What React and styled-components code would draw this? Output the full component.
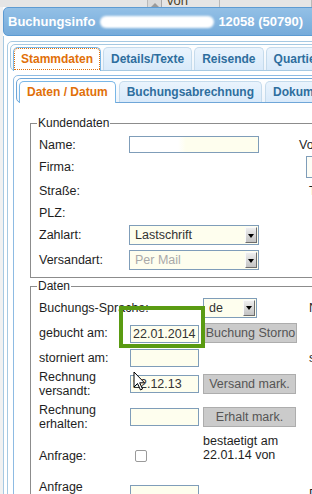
import styled, { createGlobalStyle } from "styled-components";

const FONT = `"Liberation Sans", Arial, sans-serif`;

const GlobalStyle = createGlobalStyle`
  html, body { margin: 0; padding: 0; background: #f1f1f1; }
  body { font-family: ${FONT}; }
`;

const Page = styled.div`
  position: relative;
  width: 312px;
  height: 494px;
  overflow: hidden;
  background: #f1f1f1;
`;

// strip of the page that shows behind the dialog
const BehindStrip = styled.div`
  display: flex;
  height: 7px;
  background: #e5e5e5;
  overflow: hidden;
`;

const StripCell = styled.div`
  flex: none;
  box-sizing: border-box;
  width: ${({ $w }) => $w}px;
  height: 7px;
  padding-left: ${({ $pad }) => $pad || 0}px;
  border-right: 1px solid #b9b9b9;
  overflow: hidden;
  color: #4d4328;
  font-size: 13px;
  line-height: 13px;

  span {
    display: block;
    margin-top: -6px;
  }
`;

const ScrollArrow = styled.div`
  flex: none;
  box-sizing: border-box;
  width: 14px;
  height: 7px;
  display: flex;
  justify-content: center;
  background: #dadada;
  border-right: 1px solid #a9a9a9;

  &::after {
    content: "";
    margin-top: 1px;
    border: 4px solid transparent;
    border-top: none;
    border-bottom-color: #9a9a9a;
  }
`;

const Dialog = styled.div`
  margin-left: 3px;
  width: 360px;
  background: #fff;
`;

const TitleBar = styled.div`
  display: flex;
  align-items: center;
  box-sizing: border-box;
  height: 29px;
  padding-left: 4px;
  border: 1px solid #5d9bd2;
  border-radius: 5px;
  background: linear-gradient(#93c0e6, #76abda);
  color: #fff;
  font: bold 13px ${FONT};
  white-space: nowrap;
`;

const Redacted = styled.span`
  display: inline-block;
  flex: none;
  width: ${({ $w }) => $w}px;
  height: 12px;
  margin: 0 4px 0 5px;
  border-radius: 7px;
  background: #fff;
  filter: blur(1.2px);
`;

const DialogBody = styled.div`
  height: 460px;
  padding: 5px 0 0 3px;
  border-left: 1px solid #a6c9e2;
  background: #fff;
`;

const TabsBox = styled.div`
  box-sizing: border-box;
  height: ${({ $h }) => $h}px;
  padding: 2px;
  border: 1px solid ${({ $inner }) => ($inner ? "#8dbbe3" : "#a6c9e2")};
  border-radius: 5px;
  background: #fff;
`;

const TabNav = styled.div`
  display: flex;
  align-items: flex-start;
  gap: ${({ $gap }) => $gap}px;
  padding: 2px 2px 0;
  border: 1px solid ${({ $inner }) => ($inner ? "#6fa6d8" : "#a6c9e2")};
  border-radius: 5px;
  background: linear-gradient(#ffffff, #edf4fb);
  white-space: nowrap;
`;

const Tab = styled.div`
  flex: none;
  padding: ${({ $pad }) => $pad}px 7px;
  padding-bottom: ${({ $pad, $active }) => $pad + ($active ? 1 : 0)}px;
  margin-bottom: ${({ $active }) => ($active ? -1 : 0)}px;
  border: 1px solid ${({ $active }) => ($active ? "#79b7e7" : "#c5dbec")};
  border-bottom: none;
  border-radius: 5px 5px 0 0;
  background: ${({ $active }) =>
    $active ? "#fff" : "linear-gradient(#eaf4fd, #d9eafa)"};
  color: ${({ $active }) => ($active ? "#e17009" : "#2e6e9e")};
  font: bold 12px/14px ${FONT};
  outline: ${({ $focus }) => ($focus ? "1px dotted #e17009" : "none")};
  outline-offset: -2px;
`;

const TabPanel = styled.div`
  padding: ${({ $pad }) => $pad};
`;

const Fieldset = styled.fieldset`
  width: 400px;
  min-width: 0;
  margin: ${({ $mt }) => $mt || 0}px 0 0;
  padding: ${({ $pt }) => $pt}px 8px 5px;
  border: 1px solid #8c8c8c;
`;

const Legend = styled.legend`
  margin-left: -2px;
  padding: 0 1px;
  color: #222;
  font-size: 12px;
  line-height: 14px;
`;

const Row = styled.div`
  display: grid;
  grid-template-columns: ${({ $cols }) => $cols};
  align-items: center;
  height: ${({ $h }) => $h}px;
`;

const Label = styled.div`
  color: #1e1e1e;
  font-size: 12.5px;
  line-height: 14px;
  white-space: nowrap;
`;

const Extra = styled.div`
  margin-left: ${({ $ml }) => $ml || 0}px;
  color: #1e1e1e;
  font-size: 12.5px;
  line-height: 14px;
  white-space: nowrap;
`;

const Info = styled(Extra)`
  align-self: start;
  line-height: 13.5px;
`;

const TextInput = styled.input`
  box-sizing: border-box;
  width: ${({ $w }) => $w}px;
  height: ${({ $h }) => $h || 18}px;
  margin: 0;
  margin-left: ${({ $ml }) => $ml || 0}px;
  padding: 0 0 0 2px;
  border: 1px solid #7f9db9;
  border-radius: 0;
  background: ${({ $bg }) => $bg || "#fefeee"};
  color: #333;
  font: 12.5px ${FONT};
  outline: none;
`;

const Select = styled.div`
  display: flex;
  align-items: center;
  justify-content: space-between;
  box-sizing: border-box;
  width: ${({ $w }) => $w}px;
  height: 20px;
  padding: 0 1px 0 5px;
  border: 1px solid #7f9db9;
  background: #fefeee;
  color: ${({ $disabled }) => ($disabled ? "#a9a9a9" : "#333")};
  font-size: 12.5px;
`;

const SelectArrow = styled.span`
  display: flex;
  align-items: center;
  justify-content: center;
  box-sizing: border-box;
  width: 12px;
  height: 16px;
  border: 1px solid;
  border-color: #fafafa #6d6d6d #6d6d6d #fafafa;
  background: linear-gradient(#eeeeee, #c3c3c3);

  &::after {
    content: "";
    margin-top: 1px;
    border: 3px solid transparent;
    border-bottom: none;
    border-top: 4px solid #000;
  }
`;

const Button = styled.button`
  box-sizing: border-box;
  width: 93px;
  height: 20px;
  margin: 0 0 0 ${({ $ml }) => $ml || 0}px;
  padding: 0;
  border: 1px solid #adadad;
  border-radius: 0;
  background: #cbcbcb;
  color: #555;
  font: 12.5px ${FONT};
  white-space: nowrap;
  overflow: hidden;
`;

const Checkbox = styled.span`
  display: block;
  box-sizing: border-box;
  width: 12px;
  height: 12px;
  margin-left: 5px;
  border: 1px solid #9a9a9a;
  border-radius: 2px;
  background: #fff;
`;

const Marked = styled.div`
  position: relative;
  width: 69px;
`;

const Highlight = styled.div`
  position: absolute;
  left: -11px;
  top: -18px;
  box-sizing: border-box;
  width: 86px;
  height: 42px;
  border: 4px solid #5a9b12;
  pointer-events: none;
  z-index: 2;
`;

const Cursor = styled.svg`
  position: absolute;
  left: 133px;
  top: 371px;
  z-index: 3;
`;

const KUNDE_COLS = "90px 130px 40px auto";
const DATEN_COLS = "91px 73px 106px auto";

const App = () => {
  return (
    <Page>
      <GlobalStyle />
      <BehindStrip>
        <StripCell $w={148} />
        <ScrollArrow />
        <StripCell $w={58} $pad={5}>
          <span>von</span>
        </StripCell>
        <StripCell $w={92} />
      </BehindStrip>

      <Dialog>
        <TitleBar>
          Buchungsinfo
          <Redacted $w={114} />
          12058 (50790)
        </TitleBar>
        <DialogBody>
          <TabsBox $h={460}>
            <TabNav $gap={2}>
              <Tab $pad={4} $active $focus>
                Stammdaten
              </Tab>
              <Tab $pad={4}>Details/Texte</Tab>
              <Tab $pad={4}>Reisende</Tab>
              <Tab $pad={4}>Quartiere</Tab>
            </TabNav>
            <TabPanel $pad="4px 0 0 3px">
              <TabsBox $inner $h={430}>
                <TabNav $inner $gap={3}>
                  <Tab $pad={3} $active>
                    Daten / Datum
                  </Tab>
                  <Tab $pad={3}>Buchungsabrechnung</Tab>
                  <Tab $pad={3}>Dokumente</Tab>
                </TabNav>
                <TabPanel $pad="13px 0 0 14px">
                  <Fieldset $pt={4}>
                    <Legend>Kundendaten</Legend>
                    <Row $cols={KUNDE_COLS} $h={21}>
                      <Label>Name:</Label>
                      <TextInput
                        readOnly
                        value=""
                        $w={130}
                        $h={17}
                        $bg="linear-gradient(90deg, #fff 0 48px, #fefeee 56px)"
                      />
                      <span />
                      <Extra>Vorname:</Extra>
                    </Row>
                    <Row $cols={KUNDE_COLS} $h={23}>
                      <Label>Firma:</Label>
                      <span />
                      <span />
                      <TextInput readOnly value="" $w={80} $h={22} $ml={7} $bg="#fdfdf6" />
                    </Row>
                    <Row $cols={KUNDE_COLS} $h={25}>
                      <Label>Straße:</Label>
                      <span />
                      <span />
                      <Extra $ml={10}>Telefon:</Extra>
                    </Row>
                    <Row $cols={KUNDE_COLS} $h={19}>
                      <Label>PLZ:</Label>
                    </Row>
                    <Row $cols={KUNDE_COLS} $h={26}>
                      <Label>Zahlart:</Label>
                      <Select $w={130}>
                        Lastschrift
                        <SelectArrow />
                      </Select>
                    </Row>
                    <Row $cols={KUNDE_COLS} $h={24}>
                      <Label>Versandart:</Label>
                      <Select $w={130} $disabled>
                        Per Mail
                        <SelectArrow />
                      </Select>
                    </Row>
                  </Fieldset>

                  <Fieldset $mt={1} $pt={2}>
                    <Legend>Daten</Legend>
                    <Row $cols={DATEN_COLS} $h={25}>
                      <Label>Buchungs-Sprache:</Label>
                      <span />
                      <Select $w={54}>
                        de
                        <SelectArrow />
                      </Select>
                      <Extra>Notiz:</Extra>
                    </Row>
                    <Row $cols={DATEN_COLS} $h={26}>
                      <Label>gebucht am:</Label>
                      <Marked>
                        <TextInput readOnly value="22.01.2014" $w={69} />
                        <Highlight />
                      </Marked>
                      <Button $ml={1}>Buchung Storno</Button>
                    </Row>
                    <Row $cols={DATEN_COLS} $h={23}>
                      <Label>storniert am:</Label>
                      <TextInput readOnly value="" $w={69} />
                      <span />
                      <Extra>storniert von</Extra>
                    </Row>
                    <Row $cols={DATEN_COLS} $h={30}>
                      <Label>
                        Rechnung
                        <br />
                        versandt:
                      </Label>
                      <TextInput readOnly value="22.12.13" $w={69} />
                      <Button>Versand mark.</Button>
                    </Row>
                    <Row $cols={DATEN_COLS} $h={36}>
                      <Label>
                        Rechnung
                        <br />
                        erhalten:
                      </Label>
                      <TextInput readOnly value="" $w={69} />
                      <Button>Erhalt mark.</Button>
                    </Row>
                    <Row $cols={DATEN_COLS} $h={42}>
                      <Label>Anfrage:</Label>
                      <Checkbox />
                      <Info>
                        bestaetigt am
                        <br />
                        22.01.14 von
                      </Info>
                    </Row>
                    <Row $cols={DATEN_COLS} $h={34}>
                      <Label>
                        Anfrage
                        <br />
                        beantwortet:
                      </Label>
                      <TextInput readOnly value="" $w={69} />
                      <span />
                      <Extra>Datum</Extra>
                    </Row>
                  </Fieldset>
                </TabPanel>
              </TabsBox>
            </TabPanel>
          </TabsBox>
        </DialogBody>
      </Dialog>

      <Cursor width="14" height="21" viewBox="0 0 14 21">
        <path
          d="M1 1 L1 16 L4.5 12.5 L7.5 19 L9.5 18 L6.7 11.8 L11.5 11.8 Z"
          fill="#fff"
          stroke="#000"
          strokeWidth="1"
          strokeLinejoin="round"
        />
      </Cursor>
    </Page>
  );
};

export default App;
